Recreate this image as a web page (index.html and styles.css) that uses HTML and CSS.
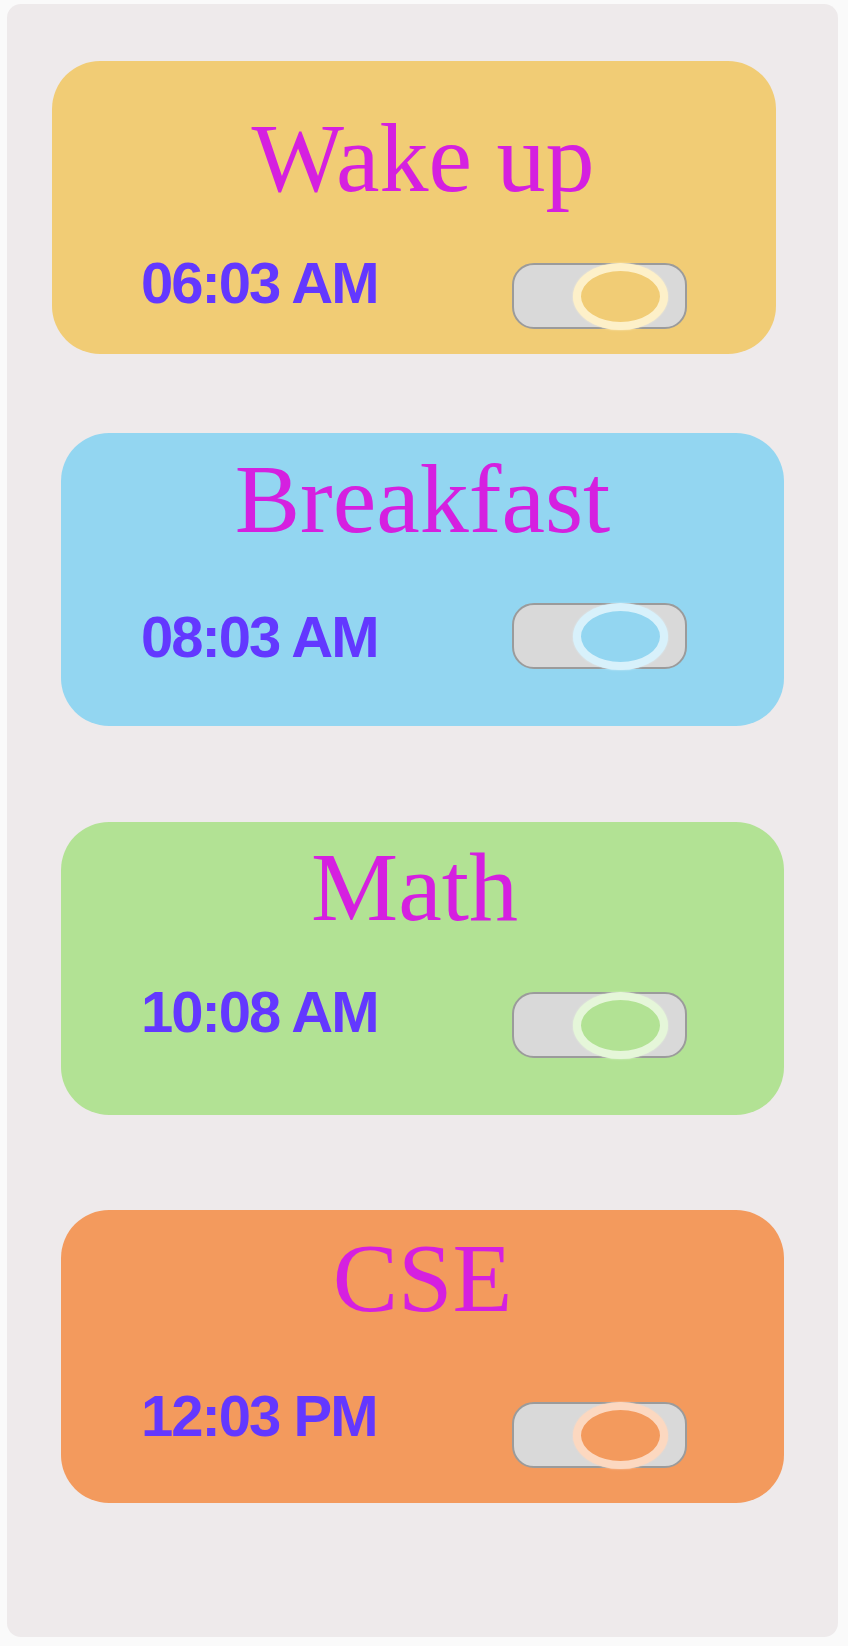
FILE: index.html
```html
<!DOCTYPE html>
<html lang="en">
<head>
<meta charset="utf-8">
<title>Schedule</title>
<link rel="stylesheet" href="styles.css">
</head>
<body>
<main class="panel">
  <section class="card card--wake">
    <h2 class="card__title">Wake up</h2>
    <div class="card__row">
      <span class="card__time">06:03 AM</span>
      <span class="toggle"><span class="toggle__thumb"></span></span>
    </div>
  </section>
  <section class="card card--breakfast">
    <h2 class="card__title">Breakfast</h2>
    <div class="card__row">
      <span class="card__time">08:03 AM</span>
      <span class="toggle"><span class="toggle__thumb"></span></span>
    </div>
  </section>
  <section class="card card--math">
    <h2 class="card__title">Math</h2>
    <div class="card__row">
      <span class="card__time">10:08 AM</span>
      <span class="toggle"><span class="toggle__thumb"></span></span>
    </div>
  </section>
  <section class="card card--cse">
    <h2 class="card__title">CSE</h2>
    <div class="card__row">
      <span class="card__time">12:03 PM</span>
      <span class="toggle"><span class="toggle__thumb"></span></span>
    </div>
  </section>
</main>
</body>
</html>
```
FILE: styles.css
```css
* { box-sizing: border-box; }

html, body {
  margin: 0;
  padding: 0;
  background: #fafafa;
}

body {
  padding: 4px 10px 9px 7px;
}

.panel {
  width: 831px;
  height: 1633px;
  background: #eeeaeb;
  border-radius: 14px;
  padding-top: 57px;
  display: flex;
  flex-direction: column;
  align-items: flex-start;
}

.card {
  --card: #f1cc75;
  --ring: #fdf0c9;
  width: 723px;
  height: 293px;
  margin-left: 54px;
  padding-left: 80px;
  border-radius: 48px;
  background: var(--card);
  display: flex;
  flex-direction: column;
}

.card__title {
  margin: 0 0 0 -80px;
  font-family: "Liberation Serif", "Times New Roman", serif;
  font-weight: normal;
  font-size: 98px;
  line-height: 100px;
  color: #d520e0;
  text-align: center;
}

.card__row {
  display: flex;
  align-items: flex-start;
}

.card__time {
  flex: 0 0 371px;
  font-family: "Liberation Sans", Arial, sans-serif;
  font-weight: bold;
  font-size: 58px;
  line-height: 58px;
  letter-spacing: -2px;
  color: #6338ff;
  white-space: nowrap;
}

.toggle {
  position: relative;
  flex: 0 0 175px;
  height: 66px;
  border: 2px solid #9b9b9b;
  border-radius: 22px;
  background: #d9d9d9;
}

.toggle__thumb {
  position: absolute;
  left: 59px;
  top: -2px;
  width: 95px;
  height: 67px;
  border-radius: 50%;
  border: 8px solid var(--ring);
  background: var(--card);
  box-shadow: 0 0 2px var(--ring);
}

/* Wake up */
.card--wake {
  width: 724px;
  margin-left: 45px;
  padding-left: 89px;
  padding-top: 47px;
}
.card--wake .card__title { margin-left: -89px; padding-left: 18px; }
.card--wake .card__row { margin-top: 46px; }
.card--wake .toggle { margin-top: 9px; }

/* Breakfast */
.card--breakfast {
  --card: #93d6f1;
  --ring: #d8f1fb;
  margin-top: 79px;
  padding-top: 16px;
}
.card--breakfast .card__row { margin-top: 54px; }
.card--breakfast .card__time { margin-top: 5px; }

/* Math */
.card--math {
  --card: #b2e294;
  --ring: #e5f6d9;
  margin-top: 96px;
  padding-top: 15px;
}
.card--math .card__title { padding-right: 16px; }
.card--math .card__row { margin-top: 46px; }
.card--math .toggle { margin-top: 9px; }

/* CSE */
.card--cse {
  --card: #f39a5d;
  --ring: #fcd8c0;
  margin-top: 95px;
  padding-top: 18px;
}
.card--cse .card__row { margin-top: 59px; }
.card--cse .toggle { margin-top: 15px; }
```
